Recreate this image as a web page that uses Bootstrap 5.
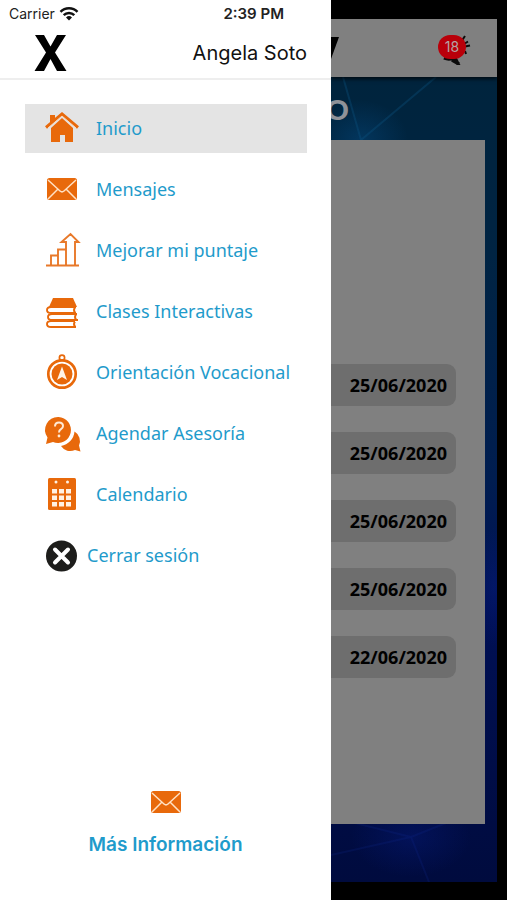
<!DOCTYPE html>
<html lang="es">
<head>
<meta charset="utf-8">
<meta name="viewport" content="width=device-width, initial-scale=1">
<title>Menú</title>
<link href="https://cdn.jsdelivr.net/npm/bootstrap@5.3.0/dist/css/bootstrap.min.css" rel="stylesheet">
<style>
body{background:#000;font-family:"Open Sans","Noto Sans",sans-serif}
.drawer{flex:0 0 331px;background:#fff}
.ui-font{font-family:Inter,"Liberation Sans",sans-serif}
.status{height:28px;padding-left:9px;padding-right:47px;font-size:14px;line-height:28px;color:#222}
.status .clock{font-size:15px;font-weight:600}
.drawer-head{height:52px;padding:0 24px 0 34px;border-bottom:2px solid #eee}
.close-btn{line-height:0}
.user{font-size:20px;color:#111}
.menu{padding:24px 24px 0 25px;gap:12px;font-family:"Noto Sans","Open Sans",sans-serif}
.menu-link{height:49px;padding-left:19px;gap:16px;font-size:18px;color:#1f9bcb;text-decoration:none;white-space:nowrap}
.menu-link.current{background:#e4e4e4}
.menu-link.logout{gap:7px}
.menu-link svg{flex:none;overflow:visible}
.more{padding-bottom:42px;gap:13px;font-size:19px;line-height:26px;font-weight:600;color:#1f9bcb;text-decoration:none}
.behind{padding:19px 10px 18px 0;min-width:0}
.topbar{height:58px;background:#808080;padding-right:26px;box-shadow:0 2px 4px rgba(0,0,0,.7);clip-path:inset(0 0 -8px 0);z-index:1}
.bell{width:34px;height:34px}
.count{position:absolute;left:1px;top:4px;width:28px;height:24px;border-radius:12px;background:#b9000a;color:#b4a4a4;font-size:14px;line-height:24px}
.stage{background:linear-gradient(180deg,#00243d 0,#002443 22%,#001d50 50%,#001055 66%,#000b3e 100%);padding:0 12px 58px 0}
.rays{position:absolute;inset:0;width:100%;height:100%}
.heading{width:18px;height:63px;font-family:"Liberation Sans",Arial,sans-serif;font-size:30px;line-height:66px;font-weight:700;color:#8f9299}
.sheet{background:#808080;padding:224px 29px 0 0;gap:26px}
.entry{height:42px;border-radius:0 9px 9px 0;background:#6e6e6e;padding-right:9px;font-size:18px;font-weight:700;color:#000}
</style>
<script src="https://cdn.jsdelivr.net/npm/bootstrap@5.3.0/dist/js/bootstrap.bundle.min.js"></script>
</head>
<body>
<svg class="d-none" aria-hidden="true">
<symbol id="mail" viewBox="0 0 36 36"><rect x="3" y="6" width="30" height="22" rx="2.500" fill="#e8690b"/><path d="M4 8l12 11q2 1.800 4 0L32 8M4 27l10-10M32 27L22 17" fill="none" stroke="#ffe1c4" stroke-width="1.500"/></symbol>
</svg>
<div class="d-flex min-vh-100">
<aside class="drawer d-flex flex-column">
  <div class="status ui-font d-flex justify-content-between">
    <span class="d-flex align-items-center gap-1">Carrier
      <svg width="20" height="16" viewBox="0 0 20 16" aria-hidden="true"><g fill="none" stroke="#111" stroke-width="2.500"><path d="M1.500 5.800a12 12 0 0 1 17 0"/><path d="M4.700 9.200a7.500 7.500 0 0 1 10.600 0"/></g><path d="M10 14.500l-3-3a4.300 4.300 0 0 1 6 0z" fill="#111"/></svg>
    </span>
    <span class="clock">2:39 PM</span>
  </div>
  <header class="drawer-head d-flex align-items-center justify-content-between">
    <button class="close-btn btn p-0 border-0 rounded-0" type="button" aria-label="Cerrar menú">
      <svg width="33" height="36" viewBox="0 0 33 36"><path d="M1 0h9l6.500 11.500L23 0h9L21 17.500 32.500 36H23l-6.500-12L10 36H.5L12 17.500z" fill="#000"/></svg>
    </button>
    <span class="user ui-font">Angela Soto</span>
  </header>
  <nav class="menu d-flex flex-column" aria-label="Principal">
    <a class="menu-link current d-flex align-items-center" href="#" aria-current="page">
      <svg width="36" height="36" viewBox="0 0 36 36" aria-hidden="true"><path d="M6 4h5v5l-5 5zM7 17L18 7l11 10v14h-8v-7h-5v7H7z" fill="#e8690b"/><path d="M2 16.500L18 3l16 13.500" fill="none" stroke="#e8690b" stroke-width="3"/><path d="M4 17L18 5l14 12" fill="none" stroke="#fbd9bd" stroke-width="1"/></svg>
      Inicio</a>
    <a class="menu-link d-flex align-items-center" href="#"><svg width="36" height="36" aria-hidden="true"><use href="#mail"/></svg>Mensajes</a>
    <a class="menu-link d-flex align-items-center" href="#">
      <svg width="36" height="36" viewBox="0 0 36 36" aria-hidden="true"><g fill="none" stroke="#e8792a" stroke-width="1.900"><path d="M2 32.500h33M7 32V22.500h7V32M14 32V16.500h8V32M22 32V9h-4.500L26.500 1l8 8H31v23"/></g></svg>
      Mejorar mi puntaje</a>
    <a class="menu-link d-flex align-items-center" href="#">
      <svg width="36" height="36" viewBox="0 0 36 36" aria-hidden="true"><path d="M9 4h20l4 9H5z" fill="#e8690b"/><g fill="none" stroke="#e8690b" stroke-width="1.900"><path d="M32 13H7q-4 0-4 3t4 3h25M31 13.500q-2 2.500 0 5M33 20H8q-4 0-4 3t4 3h26M32 20.500q-2 2.500 0 5M31 27H7q-4 0-4 3t4 3h25M31 27.500q-2 2.500 0 5"/></g></svg>
      Clases Interactivas</a>
    <a class="menu-link d-flex align-items-center" href="#">
      <svg width="36" height="36" viewBox="0 0 36 36" aria-hidden="true"><g fill="none" stroke="#e8690b"><circle cx="18" cy="19" r="13.700" stroke-width="2.700"/><circle cx="18" cy="2.800" r="2.600" stroke-width="1.700"/></g><circle cx="18" cy="19" r="10.500" fill="#e8690b"/><path d="M18 11.500l5 13.500-5-3-5 3z" fill="#fff4e8"/></svg>
      Orientación Vocacional</a>
    <a class="menu-link d-flex align-items-center" href="#">
      <svg width="36" height="36" viewBox="0 0 36 36" aria-hidden="true"><path d="M14.500 1a13 13 0 1 1-5.500 25l-7 2 1.500-6.500A13 13 0 0 1 14.500 1z" fill="#e8690b"/><path d="M30.500 15.500a11 11 0 0 1 4.500 14l1.500 6-5.500-1.500a11 11 0 0 1-14-4A16 16 0 0 0 30.500 15.500z" fill="#e8690b"/><path d="M11 10.500q0-4 4-4t4 3.500q0 2-2 3.200-2 1.300-2 3.300" fill="none" stroke="#ffe9d4" stroke-width="2"/><circle cx="15" cy="20" r="1.400" fill="#ffe9d4"/></svg>
      Agendar Asesoría</a>
    <a class="menu-link d-flex align-items-center" href="#">
      <svg width="36" height="36" viewBox="0 0 36 36" aria-hidden="true"><rect x="4" y="1" width="28" height="32" rx="1.500" fill="#e8690b"/><g fill="#fff1e3"><circle cx="12" cy="5" r="1.500"/><circle cx="23.500" cy="5" r="1.500"/><path d="M8 12h5v4.500H8zm7 0h5v4.500h-5zm7 0h5v4.500h-5zM8 18.500h5V23H8zm7 0h5V23h-5zm7 0h5V23h-5zM8 25h5v4.500H8zm7 0h5v4.500h-5zm7 0h5v4.500h-5z"/></g></svg>
      Calendario</a>
    <a class="menu-link logout d-flex align-items-center" href="#">
      <svg width="36" height="36" viewBox="0 0 36 36" aria-hidden="true"><circle cx="17.500" cy="18" r="15.500" fill="#1d1d1b"/><path d="M11 11.500l13 13M24 11.500l-13 13" stroke="#fff" stroke-width="4" stroke-linecap="round"/></svg>
      Cerrar sesión</a>
  </nav>
  <a class="more ui-font mt-auto d-flex flex-column align-items-center" href="#">
    <svg width="36" height="32" viewBox="0 2 36 32" aria-hidden="true"><use href="#mail" width="36" height="36"/></svg>
    Más Información
  </a>
</aside>
<main class="behind d-flex flex-column flex-grow-1">
  <div class="topbar position-relative d-flex align-items-center justify-content-between">
    <svg width="8" height="22" viewBox="0 0 8 22" aria-hidden="true"><path d="M0 0h8L0 22z" fill="#000"/></svg>
    <button class="bell btn p-0 border-0 position-relative ui-font" type="button" aria-label="18 notificaciones">
      <svg class="d-block" width="34" height="34" viewBox="0 0 34 34" aria-hidden="true"><g stroke="#0b0b0b" fill="none"><path d="M24 11l4-6M27 13l4-2.500M28 15.500l5-1M28 20l1 3" stroke-width="2"/><path d="M7 27q5 2 9 0M15 29l7 4M18 27l4 8" stroke-width="3.500"/></g></svg>
      <span class="count">18</span>
    </button>
  </div>
  <div class="stage position-relative d-flex flex-column flex-grow-1">
    <svg class="rays" viewBox="0 0 166 805" preserveAspectRatio="none" aria-hidden="true"><defs><radialGradient id="glow"><stop stop-color="#07508a" stop-opacity=".4"/><stop offset="1" stop-color="#07508a" stop-opacity="0"/></radialGradient><radialGradient id="deep"><stop stop-color="#0a25a0" stop-opacity=".25"/><stop offset="1" stop-color="#0a25a0" stop-opacity="0"/></radialGradient></defs><ellipse cx="29" cy="63" rx="48" ry="40" fill="url(#glow)"/><path d="M12 0L30 63 105 0" stroke="#0b5280" stroke-width="2" stroke-opacity=".35" fill="none"/><path d="M0 778L80 760 130 740M80 760L20 745M80 760L98 805" stroke="#0b2380" stroke-width="2" stroke-opacity=".25" fill="none"/><ellipse cx="80" cy="760" rx="60" ry="40" fill="url(#deep)"/><ellipse cx="163" cy="510" rx="22" ry="60" fill="url(#deep)"/></svg>
    <div class="heading position-relative overflow-hidden d-flex justify-content-end">O</div>
    <div class="sheet position-relative d-flex flex-column flex-grow-1">
      <div class="entry d-flex align-items-center justify-content-end">25/06/2020</div>
      <div class="entry d-flex align-items-center justify-content-end">25/06/2020</div>
      <div class="entry d-flex align-items-center justify-content-end">25/06/2020</div>
      <div class="entry d-flex align-items-center justify-content-end">25/06/2020</div>
      <div class="entry d-flex align-items-center justify-content-end">22/06/2020</div>
    </div>
  </div>
</main>
</div>
</body>
</html>
